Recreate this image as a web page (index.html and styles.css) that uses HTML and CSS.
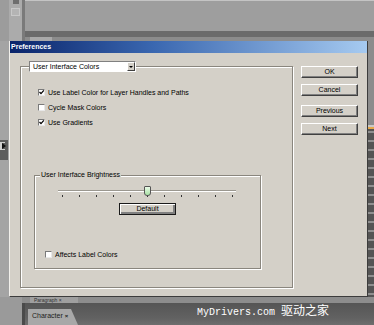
FILE: index.html
```html
<!DOCTYPE html>
<html lang="en">
<head>
    <meta charset="UTF-8">
    <title>Preferences</title>
    <link rel="stylesheet" href="styles.css">
</head>
<body>
    <div class="app">
        <div class="top">
            <div class="tools">
                <span class="tool-icon"></span>
                <span class="tool-box"></span>
            </div>
            <div class="sep"></div>
            <div class="top-panel">
                <div class="panel-body"></div>
                <div class="panel-bar"></div>
                <div class="panel-tabs"><span class="mini-tab"></span></div>
            </div>
        </div>

        <div class="middle">
            <div class="side-left">
                <div class="collapse"><span class="arrow"></span></div>
            </div>

            <div class="dialog">
                <div class="titlebar">Preferences</div>
                <div class="dialog-body">
                    <div class="group">
                        <div class="select">
                            <span class="select-text">User Interface Colors</span>
                            <span class="select-btn"><span class="caret"></span></span>
                        </div>

                        <div class="checks">
                            <div class="check-row">
                                <span class="box checked"><svg viewBox="0 0 7 7" width="7" height="7"><path d="M1.5 3 L3 4.6 L5.8 1.4" fill="none" stroke="#000" stroke-width="1.3"/></svg></span>
                                <span>Use Label Color for Layer Handles and Paths</span>
                            </div>
                            <div class="check-row">
                                <span class="box"></span>
                                <span>Cycle Mask Colors</span>
                            </div>
                            <div class="check-row">
                                <span class="box checked"><svg viewBox="0 0 7 7" width="7" height="7"><path d="M1.5 3 L3 4.6 L5.8 1.4" fill="none" stroke="#000" stroke-width="1.3"/></svg></span>
                                <span>Use Gradients</span>
                            </div>
                        </div>

                        <div class="subgroup">
                            <span class="legend">User Interface Brightness</span>
                            <div class="slider">
                                <div class="track"></div>
                                <div class="ticks">
                                    <i></i><i></i><i></i><i></i><i></i><i></i><i></i><i></i><i></i><i></i><i></i>
                                </div>
                                <span class="thumb"></span>
                            </div>
                            <div class="btn btn-default">Default</div>
                            <div class="check-row affects">
                                <span class="box"></span>
                                <span>Affects Label Colors</span>
                            </div>
                        </div>
                    </div>

                    <div class="buttons">
                        <div class="btn">OK</div>
                        <div class="btn">Cancel</div>
                        <div class="btn gap-big">Previous</div>
                        <div class="btn">Next</div>
                    </div>
                </div>
            </div>

            <div class="side-right"></div>
        </div>

        <div class="bottom">
            <div class="bottom-strip">
                <div class="tools-small"></div>
                <div class="para-tab">Paragraph &times;</div>
            </div>
            <div class="bottom-bar">
                <div class="tools-small"></div>
                <div class="sep dark"></div>
                <div class="char-tab">Character <b>&times;</b></div>
                <div class="watermark">MyDrivers.com <span class="cjk">驱动之家</span></div>
            </div>
        </div>
    </div>
</body>
</html>
```

FILE: styles.css
```css
html, body {
    margin: 0;
    padding: 0;
}
body {
    font-family: "Liberation Sans", Arial, sans-serif;
    font-size: 7px;
    color: #000;
    background-color: #8a8a8a;
}
.app {
    width: 374px;
    height: 325px;
    display: grid;
    grid-template-rows: 41px 256px 28px;
    overflow: hidden;
}

/* top application strip */
.top {
    display: flex;
}
.tools {
    width: 22px;
    background: linear-gradient(to right, #9c9c9c 0, #9c9c9c 9px, #ababab 9px);
    display: flex;
    flex-direction: column;
    align-items: flex-end;
    padding-right: 2px;
    box-sizing: border-box;
}
.tool-icon {
    width: 6px;
    height: 4px;
    margin-right: 1px;
    background: #6e6e6e;
}
.tool-box {
    width: 7px;
    height: 6px;
    margin-top: 4px;
    border: 1px solid #c8c8c8;
    background: #b4b4b4;
}
.sep {
    width: 3px;
    background: #7a7a7a;
}
.sep.dark {
    background: #4a4a4a;
}
.top-panel {
    flex: 1;
    display: flex;
    flex-direction: column;
}
.panel-body {
    height: 30px;
    border-top: 1px solid #c4c4c4;
    background: #9e9e9e;
}
.panel-bar {
    height: 6px;
    background: #6b6b6b;
}
.panel-tabs {
    flex: 1;
    background: #8c8c8c;
}
.mini-tab {
    display: block;
    width: 22px;
    height: 4px;
    margin-left: 5px;
    background: #a9a9a9;
}

/* middle row */
.middle {
    display: flex;
}
.side-left {
    width: 9px;
    background: #a4a4a4;
    padding-top: 99px;
    box-sizing: border-box;
}
.collapse {
    width: 8px;
    height: 20px;
    background: #5d5d5d;
    display: flex;
    align-items: flex-start;
    padding-top: 3px;
    box-sizing: border-box;
}
.arrow {
    width: 0;
    height: 0;
    margin-left: 2px;
    border-top: 3px solid transparent;
    border-bottom: 3px solid transparent;
    border-left: 4px solid #111;
    box-shadow: -2px 0 0 1px #cfcfcf;
}
.side-right {
    flex: 1;
    background:
        linear-gradient(to bottom, #8c8c8c 0, #8c8c8c 84px, #c8c8c8 84px, #c8c8c8 86px, #e6a84a 86px, #e6a84a 88px, transparent 88px),
        repeating-linear-gradient(to bottom, #8f8f8f 0, #8f8f8f 2px, #545454 2px, #545454 9px);
}

/* dialog */
.dialog {
    width: 359px;
    background-color: #d4d0c8;
    border-left: 1px solid #f2f0ec;
    border-right: 1px solid #3c3c3c;
    border-bottom: 1px solid #3c3c3c;
    box-sizing: border-box;
    display: flex;
    flex-direction: column;
}
.titlebar {
    height: 12px;
    line-height: 12px;
    padding-left: 1px;
    font-weight: bold;
    color: #fff;
    background: linear-gradient(to right, #0a246a 0%, #3a67b0 40%, #a6caf0 100%);
}
.dialog-body {
    flex: 1;
    display: flex;
    gap: 8px;
    padding: 13px 9px 8px 10px;
}
.group {
    width: 273px;
    height: 222px;
    box-sizing: border-box;
    border: 1px solid #8a867e;
    box-shadow: inset 1px 1px 0 #fff, 1px 1px 0 #fff;
    display: flex;
    flex-direction: column;
}
.select {
    width: 107px;
    height: 11px;
    margin: -6px 0 0 8px;
    box-sizing: border-box;
    background: #fff;
    border: 1px solid;
    border-color: #808080 #fff #fff #808080;
    display: flex;
    align-items: center;
}
.select-text {
    flex: 1;
    padding-left: 3px;
    line-height: 9px;
}
.select-btn {
    width: 8px;
    height: 9px;
    box-sizing: border-box;
    background: #d4d0c8;
    border: 1px solid;
    border-color: #fff #404040 #404040 #fff;
    display: flex;
    align-items: center;
    justify-content: center;
}
.caret {
    width: 0;
    height: 0;
    border-left: 2px solid transparent;
    border-right: 2px solid transparent;
    border-top: 2px solid #000;
}
.checks {
    margin-top: 13px;
    padding-left: 17px;
}
.check-row {
    height: 15px;
    display: flex;
    align-items: center;
    gap: 3px;
}
.box {
    width: 7px;
    height: 7px;
    box-sizing: border-box;
    background: #fff;
    border: 1px solid;
    border-color: #7a7a7a #e8e8e8 #e8e8e8 #7a7a7a;
    display: flex;
}
.box svg {
    margin: -1px;
}

/* brightness group */
.subgroup {
    width: 227px;
    height: 94px;
    margin: 45px 0 0 13px;
    box-sizing: border-box;
    border: 1px solid #8a867e;
    box-shadow: inset 1px 1px 0 #fff, 1px 1px 0 #fff;
    display: flex;
    flex-direction: column;
}
.legend {
    align-self: flex-start;
    margin: -6px 0 0 5px;
    padding: 0 1px;
    line-height: 9px;
    background: #d4d0c8;
}
.slider {
    position: relative;
    width: 178px;
    height: 13px;
    margin: 6px 0 0 23px;
}
.track {
    margin-top: 5px;
    height: 1px;
    border-top: 1px solid #9a978f;
    background: #fff;
}
.ticks {
    display: flex;
    justify-content: space-between;
    padding: 0 3px 0 4px;
    margin-top: 3px;
}
.ticks i {
    width: 1px;
    height: 2px;
    background: #333;
}
.thumb {
    position: absolute;
    left: 86px;
    top: 1px;
    width: 7px;
    height: 10px;
    box-sizing: border-box;
    background: linear-gradient(#eafbe8, #a7e0a3);
    border: 1px solid #555;
    border-radius: 1px 1px 3px 3px;
}
.btn {
    height: 12px;
    box-sizing: border-box;
    border: 1px solid;
    border-color: #fff #404040 #404040 #fff;
    box-shadow: inset -1px -1px 0 #808080;
    display: flex;
    align-items: center;
    justify-content: center;
    line-height: 10px;
}
.btn-default {
    width: 57px;
    margin-top: 5px;
    align-self: center;
    border: 1px solid #1a1a1a;
    box-shadow: inset 1px 1px 0 #fff, inset -2px -2px 0 #808080;
}
.affects {
    height: 11px;
    margin-top: 34px;
    padding-left: 10px;
}
.buttons {
    width: 57px;
    display: flex;
    flex-direction: column;
    gap: 6px;
}
.buttons .gap-big {
    margin-top: 3px;
}

/* bottom panels */
.bottom {
    display: flex;
    flex-direction: column;
}
.bottom-strip {
    height: 6px;
    background: #8d8d8d;
    display: flex;
}
.tools-small {
    width: 22px;
    background: #9a9a9a;
}
.para-tab {
    margin-left: 8px;
    width: 48px;
    padding-left: 4px;
    box-sizing: border-box;
    background: #9f9f9f;
    font-size: 5px;
    line-height: 6px;
    color: #333;
    white-space: nowrap;
}
.bottom-bar {
    flex: 1;
    display: flex;
    background: linear-gradient(#555, #626262 70%, #6e6e6e);
}
.char-tab {
    margin: 6px 0 0 3px;
    width: 50px;
    padding-left: 4px;
    box-sizing: border-box;
    line-height: 13px;
    background: #a8a8a8;
    color: #222;
    clip-path: polygon(0 0, 86% 0, 100% 100%, 0 100%);
}
.char-tab b {
    font-size: 6px;
}
.watermark {
    margin: 3px 0 0 119px;
    font-family: "Liberation Mono", "Noto Sans CJK SC", monospace;
    font-size: 10px;
    line-height: 12px;
    color: #fff;
    white-space: nowrap;
}
.watermark .cjk {
    font-size: 12px;
}
```
